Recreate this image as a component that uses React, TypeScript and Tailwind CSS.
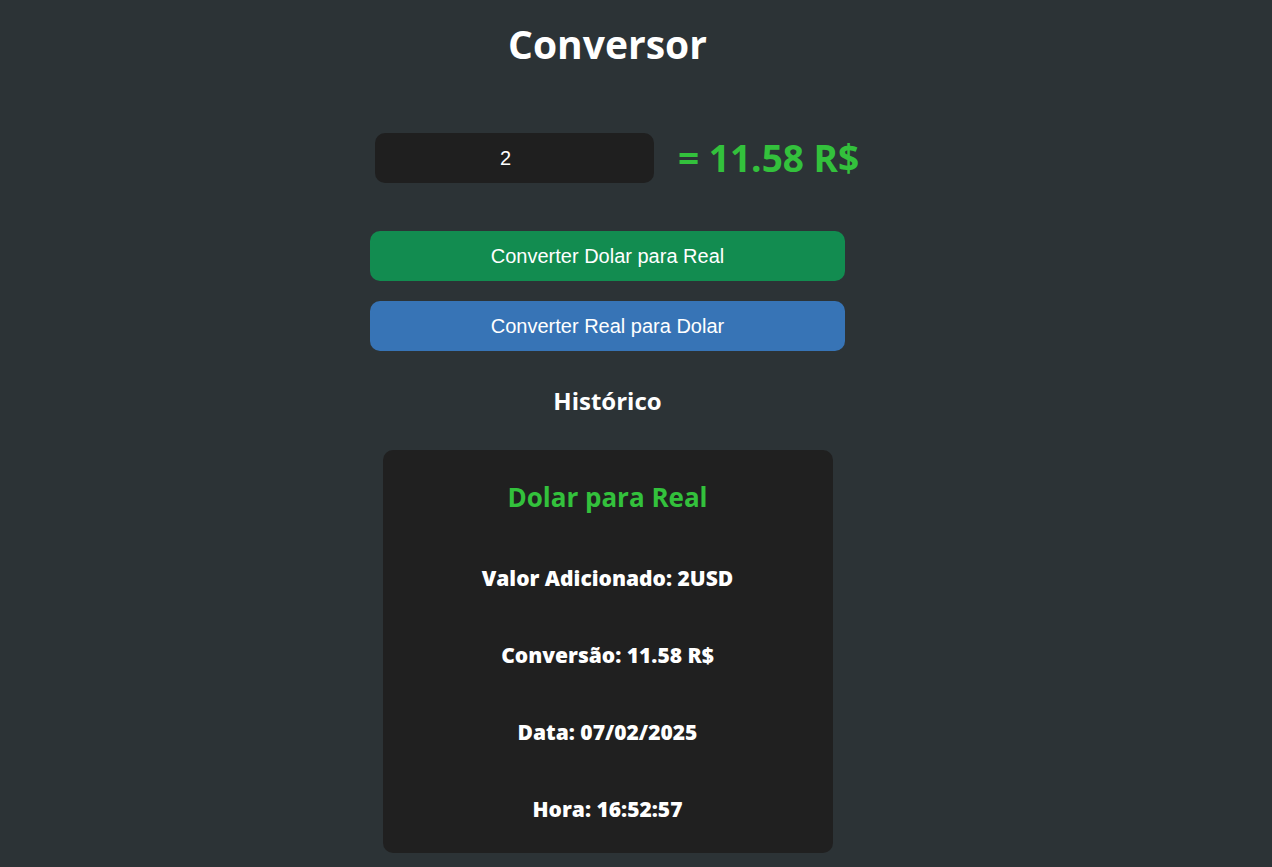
import React from "react";

export default function App() {
  const lines = [
    "Valor Adicionado: 2USD",
    "Conversão: 11.58 R$",
    "Data: 07/02/2025",
    "Hora: 16:52:57",
  ];
  return (
    <div className="min-h-[867px] w-full bg-[#2c3336] font-['Open_Sans',sans-serif] text-white">
      <div className="flex w-[1215px] flex-col items-center">
        <h1 className="mt-[17px] text-[39px] font-bold leading-[53px]">Conversor</h1>
        <div className="mt-[63px] flex items-center gap-[24px] self-start ml-[375px]">
          <input
            readOnly
            value="2"
            className="h-[50px] w-[279px] rounded-[10px] bg-[#1f1f1f] pr-[18px] text-center font-['Liberation_Sans',Arial,sans-serif] text-[20px] text-white outline-none"
          />
          <span className="text-[37px] font-bold leading-[50px] text-[#33c13c]">= 11.58 R$</span>
        </div>
        <button className="mt-[48px] h-[50px] w-[475px] rounded-[10px] bg-[#128c50] font-['Liberation_Sans',Arial,sans-serif] text-[20px] text-white">
          Converter Dolar para Real
        </button>
        <button className="mt-[20px] h-[50px] w-[475px] rounded-[10px] bg-[#3774b6] font-['Liberation_Sans',Arial,sans-serif] text-[20px] text-white">
          Converter Real para Dolar
        </button>
        <h2 className="mt-[33px] text-[24px] font-bold leading-[33px]">Histórico</h2>
        <div className="mt-[33px] flex h-[403px] w-[450px] flex-col items-center rounded-[10px] bg-[#202020] pt-[30px]">
          <h3 className="text-[26px] font-bold leading-[35px] text-[#33c13c]">Dolar para Real</h3>
          <div className="mt-[49px] flex flex-col items-center gap-[48.5px]">
            {lines.map((l) => (
              <p key={l} className="text-[21px] font-extrabold leading-[28.6px]">
                {l}
              </p>
            ))}
          </div>
        </div>
      </div>
    </div>
  );
}
